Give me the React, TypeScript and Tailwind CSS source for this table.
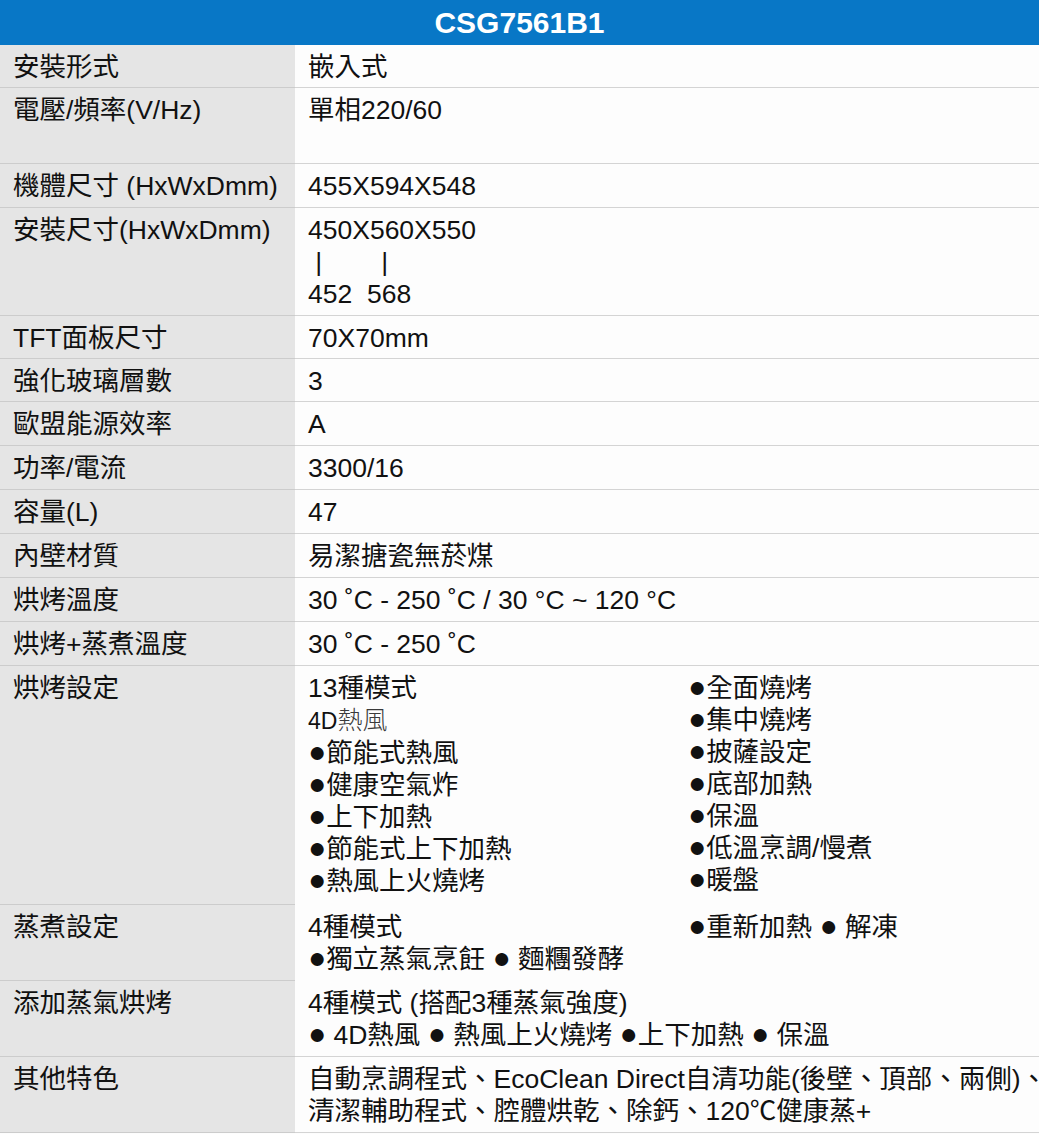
import type { ReactNode } from "react"

interface SpecRow {
  label: string
  value: ReactNode
  openRight?: boolean
  tight?: boolean
  extra?: boolean
}

// bullet dot, a bit bigger than the text like in the original sheet
const Dot = () => <span className="text-[30px] leading-none">●</span>

const rows: SpecRow[] = [
  { label: "安裝形式", value: "嵌入式", tight: true },
  {
    label: "電壓/頻率(V/Hz)",
    value: (
      <>
        <p>單相220/60</p>
        <p>&nbsp;</p>
      </>
    ),
  },
  { label: "機體尺寸 (HxWxDmm)", value: "455X594X548" },
  {
    label: "安裝尺寸(HxWxDmm)",
    value: (
      <>
        <p>450X560X550</p>
        <p className="whitespace-pre"> |&nbsp;&nbsp;&nbsp;&nbsp;&nbsp;&nbsp;&nbsp; |</p>
        <p className="whitespace-pre">452&nbsp; 568</p>
      </>
    ),
  },
  { label: "TFT面板尺寸", value: "70X70mm", tight: true },
  { label: "強化玻璃層數", value: "3", tight: true },
  { label: "歐盟能源效率", value: "A" },
  { label: "功率/電流", value: "3300/16" },
  { label: "容量(L)", value: "47" },
  { label: "內壁材質", value: "易潔搪瓷無菸煤" },
  { label: "烘烤溫度", value: "30 ˚C - 250 ˚C / 30 °C ~ 120 °C" },
  { label: "烘烤+蒸煮溫度", value: "30 ˚C - 250 ˚C" },
  {
    label: "烘烤設定",
    openRight: true,
    extra: true,
    value: (
      <div className="grid grid-cols-[380px_1fr]">
        <div>
          <p>13種模式</p>
          <p className="text-[23px]">
            4D<span className="text-[25px] font-light text-[#3a3a3a]">熱風</span>
          </p>
          <p><Dot />節能式熱風</p>
          <p><Dot />健康空氣炸</p>
          <p><Dot />上下加熱</p>
          <p><Dot />節能式上下加熱</p>
          <p><Dot />熱風上火燒烤</p>
        </div>
        <div>
          <p><Dot />全面燒烤</p>
          <p><Dot />集中燒烤</p>
          <p><Dot />披薩設定</p>
          <p><Dot />底部加熱</p>
          <p><Dot />保溫</p>
          <p><Dot />低溫烹調/慢煮</p>
          <p><Dot />暖盤</p>
        </div>
      </div>
    ),
  },
  {
    label: "蒸煮設定",
    openRight: true,
    value: (
      <div className="grid grid-cols-[380px_1fr]">
        <div>
          <p>4種模式</p>
          <p><Dot />獨立蒸氣烹飪 <Dot /> 麵糰發酵</p>
        </div>
        <div>
          <p><Dot />重新加熱 <Dot /> 解凍</p>
        </div>
      </div>
    ),
  },
  {
    label: "添加蒸氣烘烤",
    value: (
      <>
        <p>4種模式 (搭配3種蒸氣強度)</p>
        <p><Dot /> 4D熱風 <Dot /> 熱風上火燒烤 <Dot />上下加熱 <Dot /> 保溫</p>
      </>
    ),
  },
  {
    label: "其他特色",
    value: (
      <>
        <p className="whitespace-nowrap">自動烹調程式、EcoClean Direct自清功能(後壁、頂部、兩側)、</p>
        <p className="whitespace-nowrap">清潔輔助程式、腔體烘乾、除鈣、120℃健康蒸+</p>
      </>
    ),
  },
]

function App() {
  return (
    <div
      className="w-[1039px] h-[1134px] overflow-hidden bg-[#fdfdfd] text-[#111] text-[26.5px] leading-[32px]"
      style={{ fontFamily: '"Liberation Sans", "Noto Sans CJK TC", sans-serif' }}
    >
      <div className="h-[45px] bg-[#0877c6] flex items-center justify-center">
        <h1 className="text-white font-bold text-[30px] leading-none">CSG7561B1</h1>
      </div>

      {rows.map((row) => {
        const pb = row.extra ? "pb-[7px]" : row.tight ? "pb-[4px]" : "pb-[5px]"
        return (
          <div key={row.label} className="flex">
            <div className={`w-[295px] shrink-0 bg-[#e5e5e5] pl-[13px] pt-[6px] border-b border-[#cccccc] ${pb}`}>
              {row.label}
            </div>
            <div
              className={`flex-1 min-w-0 overflow-hidden pl-[13px] pt-[6px] border-b ${
                row.openRight ? "border-transparent" : "border-[#d4d4d4]"
              } ${pb}`}
            >
              {row.value}
            </div>
          </div>
        )
      })}
    </div>
  )
}

export default App
